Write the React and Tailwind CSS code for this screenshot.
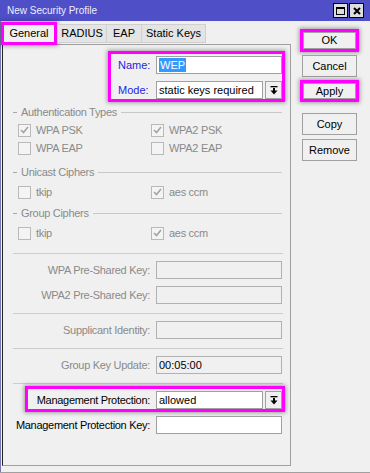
import React from "react";

const label = "text-[11px] tracking-[-0.3px] whitespace-nowrap";

function Check({ checked }) {
  return (
    <span className="w-[13px] h-[13px] border border-[#b9b9b9] bg-[#f4f4f4] flex items-center justify-center shrink-0">
      {checked && (
        <svg width="9" height="8" viewBox="0 0 9 8">
          <polyline points="1,4 3.5,6.5 8,1" fill="none" stroke="#a3a3a3" strokeWidth="1.6" />
        </svg>
      )}
    </span>
  );
}

function CheckItem({ text, checked }) {
  return (
    <div className="w-[133px] flex items-center gap-[5px]">
      <Check checked={checked} />
      <span className={`${label} text-[#8a8a8a]`}>{text}</span>
    </div>
  );
}

function Heading({ text }) {
  return (
    <div className="h-[18px] flex items-center pl-[10px] pr-[8px]">
      <span className="w-[4px] h-px bg-[#a8a8a8]" />
      <span className={`${label} text-[#8a8a8a] px-[4px]`}>{text}</span>
      <span className="flex-1 h-px bg-[#c8c8c8]" />
    </div>
  );
}

function DropBtn() {
  return (
    <div className="w-[17px] h-[18px] border border-[#a0a0a0] bg-[#f0f0f0] flex items-center justify-center">
      <svg width="8" height="9" viewBox="0 0 8 9">
        <rect x="0.5" y="0" width="7" height="1.3" fill="#000" />
        <rect x="3" y="2" width="2" height="3" fill="#000" />
        <polygon points="0.5,4.5 7.5,4.5 4,8.5" fill="#000" />
      </svg>
    </div>
  );
}

function Sep() {
  return <div className="ml-[10px] w-[270px] h-px bg-[#cdcdcd]" />;
}

function KeyRow({ text, value, className }) {
  return (
    <div className={`flex items-center h-[18px] ${className}`}>
      <div className={`w-[147px] text-right text-[#8a8a8a] ${label}`}>{text}</div>
      <div className="ml-[6px] w-[126px] h-[18px] border border-[#b1b1b1] bg-[#f0f0f0] text-[11px] text-black flex items-center px-[2px]">
        {value}
      </div>
    </div>
  );
}

function Btn({ children, className }) {
  return (
    <div className={`border border-[#a0a0a0] bg-[#f0f0f0] flex items-center justify-center text-[11px] text-black ${className}`}>
      {children}
    </div>
  );
}

const hl = "border-[3px] border-[#ff00ff] shadow-[0_0_4px_1px_rgba(0,0,0,0.35)]";

export default function App() {
  return (
    <div className="w-[370px] h-[473px] bg-[#f0f0f0] flex flex-col font-['Liberation_Sans',Arial,sans-serif] border-b border-[#a0a0a0] overflow-hidden">
      {/* title bar */}
      <div className="h-[21px] bg-[#4f4fc7] flex items-center pl-[7px] pr-[6px]">
        <span className="text-[10px] text-[#eeeeff] flex-1">New Security Profile</span>
        <div className="flex gap-[1px]">
          <div className="w-[15px] h-[15px] bg-[#dedede] border border-black flex items-center justify-center">
            <span className="w-[9px] h-[8px] border border-black border-t-2" />
          </div>
          <div className="w-[15px] h-[15px] bg-[#dedede] border border-black flex items-center justify-center">
            <svg width="8" height="8" viewBox="0 0 8 8">
              <path d="M1 1L7 7M7 1L1 7" stroke="#000" strokeWidth="2" />
            </svg>
          </div>
        </div>
      </div>

      <div className="flex flex-1 border-l border-[#7878b8]">
        {/* left: tabs + panel */}
        <div className="w-[291px] flex flex-col">
          <div className="h-[23px] flex items-end -mt-[0px] relative z-10">
            <div className={`w-[56px] h-[23px] -mb-[1px] bg-[#f0f0f0] flex items-center justify-center text-[11px] text-black ${hl}`}>
              General
            </div>
            <div className="w-[50px] h-[19px] mb-[1px] border border-[#cfcfcf] bg-[#e4e4e4] flex items-center justify-center text-[11px] text-black">
              RADIUS
            </div>
            <div className="w-[35px] h-[19px] mb-[1px] border border-l-0 border-[#cfcfcf] bg-[#e4e4e4] flex items-center justify-center text-[11px] text-black">
              EAP
            </div>
            <div className="w-[64px] h-[19px] mb-[1px] border border-l-0 border-[#cfcfcf] bg-[#e4e4e4] flex items-center justify-center text-[11px] text-black">
              Static Keys
            </div>
          </div>

          <div className="ml-[1px] w-[289px] h-[422px] border border-[#a0a0a0] border-l-[#222222] flex flex-col">
            {/* Name / Mode */}
            <div className={`ml-[105px] mt-[6px] w-[177px] h-[51px] pt-[2px] flex flex-col gap-[7px] ${hl}`}>
              <div className="flex items-center h-[18px]">
                <span className="w-[45px] pl-[7px] text-[11px] text-[#2424e6]">Name:</span>
                <div className="w-[126px] h-[18px] border border-[#a0a0a0] bg-white flex items-center px-[2px]">
                  <span className="bg-[#3399ff] text-white text-[11px] px-[1px] leading-[14px]">WEP</span>
                </div>
              </div>
              <div className="flex items-center h-[18px]">
                <span className="w-[45px] pl-[7px] text-[11px] text-[#2424e6]">Mode:</span>
                <div className="w-[107px] h-[18px] border border-[#a0a0a0] bg-white flex items-center px-[2px] text-[11px] text-black">
                  static keys required
                </div>
                <div className="ml-[2px]">
                  <DropBtn />
                </div>
              </div>
            </div>

            <div className="mt-[1px]">
              <Heading text="Authentication Types" />
            </div>
            <div className="h-[18px] flex items-center pl-[15px]">
              <CheckItem text="WPA PSK" checked />
              <CheckItem text="WPA2 PSK" checked />
            </div>
            <div className="h-[18px] flex items-center pl-[15px]">
              <CheckItem text="WPA EAP" />
              <CheckItem text="WPA2 EAP" />
            </div>

            <div className="mt-[6px]">
              <Heading text="Unicast Ciphers" />
            </div>
            <div className="mt-[2px] h-[18px] flex items-center pl-[15px]">
              <CheckItem text="tkip" />
              <CheckItem text="aes ccm" checked />
            </div>

            <div className="mt-[3px]">
              <Heading text="Group Ciphers" />
            </div>
            <div className="mt-[2px] h-[18px] flex items-center pl-[15px]">
              <CheckItem text="tkip" />
              <CheckItem text="aes ccm" checked />
            </div>

            <div className="mt-[11px]">
              <Sep />
            </div>
            <KeyRow text="WPA Pre-Shared Key:" className="mt-[7px]" />
            <KeyRow text="WPA2 Pre-Shared Key:" className="mt-[7px]" />
            <div className="mt-[9px]">
              <Sep />
            </div>
            <KeyRow text="Supplicant Identity:" className="mt-[7px]" />
            <div className="mt-[9px]">
              <Sep />
            </div>
            <KeyRow text="Group Key Update:" value="00:05:00" className="mt-[7px]" />
            <div className="mt-[9px]">
              <Sep />
            </div>

            {/* Management Protection */}
            <div className={`ml-[22px] mt-[2px] w-[260px] h-[26px] pt-[2px] flex ${hl}`}>
              <div className="flex items-center h-[18px]">
                <div className={`w-[122px] text-right text-black ${label}`}>Management Protection:</div>
                <div className="ml-[6px] w-[107px] h-[18px] border border-[#a0a0a0] bg-white flex items-center px-[2px] text-[11px] text-black">
                  allowed
                </div>
                <div className="ml-[2px]">
                  <DropBtn />
                </div>
              </div>
            </div>
            <div className="flex items-center h-[18px] mt-[4px]">
              <div className={`w-[147px] text-right text-black ${label}`}>Management Protection Key:</div>
              <div className="ml-[6px] w-[126px] h-[18px] border border-[#a0a0a0] bg-white" />
            </div>
          </div>
        </div>

        {/* right: buttons */}
        <div className="ml-[8px] w-[59px] flex flex-col">
          <div className={`mt-[8px] h-[23px] ${hl}`}>
            <Btn className="h-full">OK</Btn>
          </div>
          <Btn className="mt-[3px] mx-[2px] h-[22px]">Cancel</Btn>
          <div className={`mt-[3px] h-[22px] ${hl}`}>
            <Btn className="h-full">Apply</Btn>
          </div>
          <Btn className="mt-[11px] mx-[2px] h-[22px]">Copy</Btn>
          <Btn className="mt-[4px] mx-[2px] h-[22px]">Remove</Btn>
        </div>
      </div>
    </div>
  );
}
